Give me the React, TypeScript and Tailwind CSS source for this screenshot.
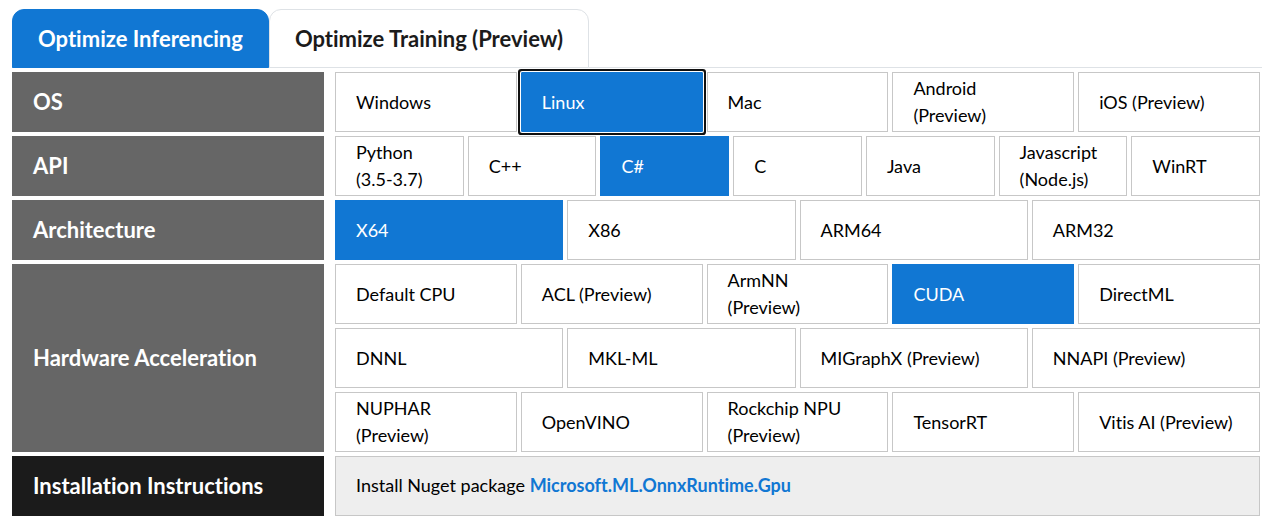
import { useState } from "react";

type Group = { id: string; label: string; rows: string[][]; initial: string };

const groups: Group[] = [
  { id: "os", label: "OS", rows: [["Windows", "Linux", "Mac", "Android (Preview)", "iOS (Preview)"]], initial: "Linux" },
  {
    id: "api",
    label: "API",
    rows: [["Python (3.5-3.7)", "C++", "C#", "C", "Java", "Javascript (Node.js)", "WinRT"]],
    initial: "C#",
  },
  { id: "architecture", label: "Architecture", rows: [["X64", "X86", "ARM64", "ARM32"]], initial: "X64" },
  {
    id: "hardware",
    label: "Hardware Acceleration",
    rows: [
      ["Default CPU", "ACL (Preview)", "ArmNN (Preview)", "CUDA", "DirectML"],
      ["DNNL", "MKL-ML", "MIGraphX (Preview)", "NNAPI (Preview)"],
      ["NUPHAR (Preview)", "OpenVINO", "Rockchip NPU (Preview)", "TensorRT", "Vitis AI (Preview)"],
    ],
    initial: "CUDA",
  },
];

const tabs = ["Optimize Inferencing", "Optimize Training (Preview)"];

function Option({
  text,
  selected,
  focused,
  onSelect,
}: {
  text: string;
  selected: boolean;
  focused: boolean;
  onSelect: () => void;
}) {
  return (
    <button
      type="button"
      role="radio"
      aria-checked={selected}
      onClick={onSelect}
      className={`flex min-h-15 min-w-0 flex-1 basis-0 items-center border pr-[23px] pl-5 text-left text-lg leading-[27px] outline-none ${
        selected ? "border-[#1177d3] bg-[#1177d3] text-white" : "border-[#c7c7c7] bg-white text-black"
      } ${focused ? "relative z-10 rounded-[1px] ring-2 ring-[#101010] ring-offset-1 ring-offset-white" : ""}`}
    >
      {text}
    </button>
  );
}

export default function App() {
  const [tab, setTab] = useState(tabs[0]);
  const [focus, setFocus] = useState("os");
  const [chosen, setChosen] = useState<Record<string, string>>(
    Object.fromEntries(groups.map((g) => [g.id, g.initial])),
  );

  return (
    <main className="bg-white px-3 pt-[9px] pr-2 font-['Lato',sans-serif] [font-variant-ligatures:none]">
      <div role="tablist" className="mb-1 flex border-b border-[#dee2e6]">
        {tabs.map((name) => (
          <button
            key={name}
            type="button"
            role="tab"
            aria-selected={tab === name}
            onClick={() => setTab(name)}
            className={`-mb-px rounded-t-xl border px-[25px] pt-3 pb-3 text-[22px] leading-[33px] font-bold ${
              tab === name ? "border-[#1177d3] bg-[#1177d3] text-white" : "border-[#dee2e6] bg-white text-[#1b1b1b]"
            }`}
          >
            {name}
          </button>
        ))}
      </div>

      <div className="flex flex-col gap-1 pr-0.5">
        {groups.map((group) => (
          <section key={group.id} className="flex gap-[11px]">
            <h2
              id={group.id}
              className="flex w-1/4 items-center bg-[#666666] pl-[21px] text-[22px] leading-8 font-bold text-white"
            >
              {group.label}
            </h2>
            <div role="radiogroup" aria-labelledby={group.id} className="flex min-w-0 flex-1 flex-col gap-1">
              {group.rows.map((row) => (
                <div key={row[0]} className="flex gap-1">
                  {row.map((text) => (
                    <Option
                      key={text}
                      text={text}
                      selected={chosen[group.id] === text}
                      focused={focus === group.id && chosen[group.id] === text}
                      onSelect={() => {
                        setChosen({ ...chosen, [group.id]: text });
                        setFocus(group.id);
                      }}
                    />
                  ))}
                </div>
              ))}
            </div>
          </section>
        ))}
        <section className="flex gap-[11px]">
          <h2 className="flex w-1/4 items-center bg-[#1b1b1b] pl-[21px] text-[22px] leading-8 font-bold text-white">
            Installation Instructions
          </h2>
          <div className="flex min-h-15 flex-1 items-center border border-[#c7c7c7] bg-[#eeeeee] px-5 pb-0.5 text-lg leading-[27px] text-black">
            <p>
              Install Nuget package{" "}
              <a href="#package" className="font-bold text-[#1177d3]">
                Microsoft.ML.OnnxRuntime.Gpu
              </a>
            </p>
          </div>
        </section>
      </div>
    </main>
  );
}
